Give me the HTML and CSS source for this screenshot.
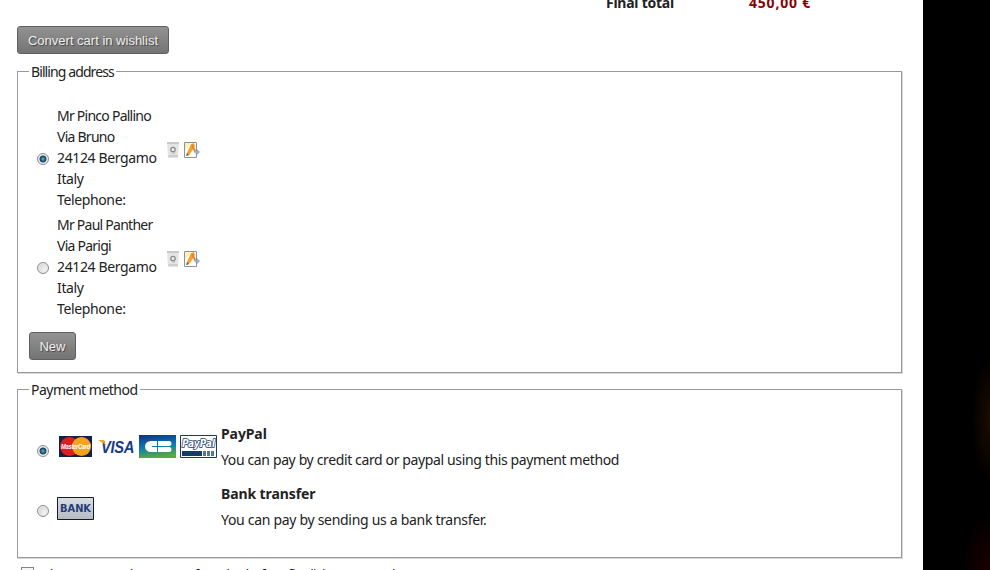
FILE: index.html
```html
<!DOCTYPE html>
<html lang="en">
<head>
    <meta charset="UTF-8">
    <title>Checkout</title>
    <link rel="stylesheet" href="styles.css">
</head>
<body>
    <div class="checkout">
        <div class="total">
            <span class="total-label">Final total</span>
            <span class="total-price">450,00 €</span>
        </div>
        <button class="btn btn-wishlist" type="button">Convert cart in wishlist</button>

        <fieldset class="billing">
            <legend>Billing address</legend>
            <div class="address">
                <span class="radio checked"></span>
                <div class="address-text"><span class="name">Mr Pinco Pallino<br>Via Bruno</span><br>24124 Bergamo<br>Italy<br>Telephone:</div>
                <div class="actions">
                    <svg class="icon" width="16" height="18" viewBox="0 0 16 18">
                        <path d="M2 1h12l-1 16H3z" fill="#e4e4e4"/>
                        <path d="M2 1h12v2H2z" fill="#c9c9c9"/>
                        <path d="M3.5 14h9.5v2H3.5z" fill="#cecece"/>
                        <circle cx="8" cy="8.5" r="2.2" fill="#eee" stroke="#8c8c8c" stroke-width="1.3"/>
                        <path d="M7 12h3" stroke="#aaa"/>
                    </svg>
                    <svg class="icon" width="18" height="18" viewBox="0 0 18 18">
                        <path d="M1.5 1.5h12v15h-12z" fill="#fff" stroke="#8a929b"/>
                        <path d="M2 2h6L2 10z" fill="#fff1b5"/>
                        <path d="M4 12L8 3l3-1 1 3-5 8-3 2z" fill="#f5a12c"/>
                        <path d="M9 4l4 8" stroke="#e18428" stroke-width="2"/>
                        <path d="M4 12l-1 3 3-1z" fill="#805030"/>
                        <path d="M12 10h2V8l3 3-3 3v-2h-2z" fill="#91b1d7"/>
                    </svg>
                </div>
            </div>
            <div class="address">
                <span class="radio"></span>
                <div class="address-text"><span class="name">Mr Paul Panther<br>Via Parigi</span><br>24124 Bergamo<br>Italy<br>Telephone:</div>
                <div class="actions">
                    <svg class="icon" width="16" height="18" viewBox="0 0 16 18">
                        <path d="M2 1h12l-1 16H3z" fill="#e4e4e4"/>
                        <path d="M2 1h12v2H2z" fill="#c9c9c9"/>
                        <path d="M3.5 14h9.5v2H3.5z" fill="#cecece"/>
                        <circle cx="8" cy="8.5" r="2.2" fill="#eee" stroke="#8c8c8c" stroke-width="1.3"/>
                        <path d="M7 12h3" stroke="#aaa"/>
                    </svg>
                    <svg class="icon" width="18" height="18" viewBox="0 0 18 18">
                        <path d="M1.5 1.5h12v15h-12z" fill="#fff" stroke="#8a929b"/>
                        <path d="M2 2h6L2 10z" fill="#fff1b5"/>
                        <path d="M4 12L8 3l3-1 1 3-5 8-3 2z" fill="#f5a12c"/>
                        <path d="M9 4l4 8" stroke="#e18428" stroke-width="2"/>
                        <path d="M4 12l-1 3 3-1z" fill="#805030"/>
                        <path d="M12 10h2V8l3 3-3 3v-2h-2z" fill="#91b1d7"/>
                    </svg>
                </div>
            </div>
            <button class="btn btn-new" type="button">New</button>
        </fieldset>

        <fieldset class="payment">
            <legend>Payment method</legend>
            <div class="method">
                <span class="radio checked"></span>
                <div class="logos">
                    <svg width="37" height="23" viewBox="0 0 37 23">
                        <path d="M2 1h33v21H2z" fill="#14204c"/>
                        <circle cx="12.5" cy="11.5" r="9.5" fill="#df1e20"/>
                        <circle cx="24.5" cy="11.5" r="9.5" fill="#f7a21a"/>
                        <text class="mastercard" x="4" y="14" textLength="29" lengthAdjust="spacingAndGlyphs">MasterCard</text>
                    </svg>
                    <svg width="37" height="23" viewBox="0 0 37 23">
                        <text class="visa" x="3" y="18" textLength="33" lengthAdjust="spacingAndGlyphs">VISA</text>
                        <path d="M0 5h6l2 5z" fill="#f2a52b"/>
                    </svg>
                    <svg width="37" height="23" viewBox="0 0 37 23">
                        <defs>
                            <linearGradient id="cb" x1="0" y1="0" x2="0.2" y2="1">
                                <stop offset="0" stop-color="#162d83"/>
                                <stop offset="0.55" stop-color="#087bb2"/>
                                <stop offset="1" stop-color="#55a943"/>
                            </linearGradient>
                        </defs>
                        <path d="M0 0h37v23H0z" fill="url(#cb)"/>
                        <path d="M18 6h-6a6 5.5 0 0 0 0 11h6v-5h-5v-1h5zM19 6h11a2.5 2.5 0 0 1 0 5H19zM19 12h11a2.5 2.5 0 0 1 0 5H19z" fill="#fff"/>
                    </svg>
                    <svg width="37" height="23" viewBox="0 0 37 23">
                        <path d="M.5.5h36v22H.5z" fill="#fff" stroke="#193b65"/>
                        <text class="paypal" x="2" y="12" textLength="33" lengthAdjust="spacingAndGlyphs">PayPal</text>
                        <path d="M2 16h20v5H2z" fill="#173b65"/>
                        <path d="M23 16h3v5h-3zM27 16h3v5h-3zM31 16h3v5h-3z" fill="#57779a"/>
                    </svg>
                </div>
                <div class="description">
                    <strong>PayPal</strong>
                    <p>You can pay by credit card or paypal using this payment method</p>
                </div>
            </div>
            <div class="method method-bank">
                <span class="radio"></span>
                <div class="logos">
                    <svg width="37" height="23" viewBox="0 0 37 23">
                        <defs>
                            <linearGradient id="bank" x1="0" y1="0" x2="0" y2="1">
                                <stop offset="0" stop-color="#dcdee2"/>
                                <stop offset="1" stop-color="#b5b9c3"/>
                            </linearGradient>
                        </defs>
                        <path d="M.5.5h36v22H.5z" fill="url(#bank)" stroke="#151a25"/>
                        <text class="bank" x="3" y="15" textLength="31" lengthAdjust="spacingAndGlyphs">BANK</text>
                    </svg>
                </div>
                <div class="description">
                    <strong>Bank transfer</strong>
                    <p>You can pay by sending us a bank transfer.</p>
                </div>
            </div>
        </fieldset>

        <div class="terms">
            <span class="checkbox"></span>
            <span class="terms-text">Please accept the terms of service before finalizing your order</span>
        </div>
    </div>
    <div class="side"></div>
</body>
</html>
```
FILE: styles.css
```css
* {
    box-sizing: border-box;
}
body {
    margin: 0;
    display: flex;
    height: 570px;
    overflow: hidden;
    background: #fff;
    color: #222;
    font-family: "Noto Sans", sans-serif;
    font-size: 14px;
    line-height: 21px;
    letter-spacing: -0.37px;
}
.checkout {
    width: 923px;
    height: 570px;
    padding: 0 21px 0 17px;
    overflow: hidden;
}
.total {
    display: flex;
    height: 26px;
    padding-left: 589px;
    font-weight: bold;
    letter-spacing: -0.25px;
}
.total span {
    margin-top: -8px;
}
.total-label {
    width: 143px;
}
.total .total-price {
    color: #8b0000;
    letter-spacing: 0.8px;
}
.btn {
    display: block;
    height: 28px;
    padding: 0;
    border: 1px solid #606060;
    border-radius: 3px;
    background: linear-gradient(#929292, #747474);
    color: #eee;
    font-family: "Liberation Sans", Arial, sans-serif;
    font-size: 13px;
    text-shadow: 1px 1px 1px #444;
}
.btn-wishlist {
    width: 152px;
}
.btn-new {
    width: 47px;
    margin-top: 13px;
}
fieldset {
    margin: 0;
    min-width: 0;
    border: 1px solid #999;
    box-shadow: 1px 1px 0 #d8d8d8;
}
legend {
    height: 21px;
    padding: 0 2px;
    letter-spacing: -0.5px;
}
.billing {
    height: 312px;
    margin-top: 7px;
    padding: 23px 11px 0;
}
.billing legend {
    letter-spacing: -0.9px;
}
.payment {
    height: 179px;
    margin-top: 6px;
    padding: 23px 11px 0;
}
.address {
    display: flex;
    height: 105px;
}
.address + .address {
    margin-top: 4px;
}
.radio {
    flex: none;
    width: 12px;
    height: 12px;
    margin: 48px 8px 0 8px;
    border: 1px solid #8c8c8c;
    border-radius: 50%;
    background: radial-gradient(circle at 65% 65%, #f5f5f5, #c9c9c9);
    box-shadow: inset 0 0 0 1px #eee;
}
.radio.checked {
    background: radial-gradient(circle, #56b8df 0, #173c55 3px, #e5e9ec 4px);
}
.address-text {
    width: 108px;
    white-space: nowrap;
}
.name {
    letter-spacing: -0.75px;
}
.actions {
    display: flex;
    gap: 2px;
    margin-top: 36px;
}
.icon {
    display: block;
}
.method {
    display: flex;
    height: 60px;
}
.method .radio {
    margin-top: 22px;
}
.logos {
    display: flex;
    gap: 4px;
    width: 164px;
    padding-top: 12px;
}
.method-bank .logos {
    padding-top: 14px;
}
.logos svg {
    flex: none;
}
.description strong {
    display: block;
    letter-spacing: -0.1px;
}
.description p {
    margin: 5px 0 0;
    white-space: nowrap;
}
.method-bank p {
    letter-spacing: -0.3px;
}
.mastercard {
    font: italic bold 7px "Liberation Sans", sans-serif;
    fill: #fff;
}
.visa {
    font: italic bold 16px "Liberation Sans", sans-serif;
    fill: #183b87;
}
.paypal {
    font: italic bold 10px "DejaVu Sans", sans-serif;
    letter-spacing: 0;
    fill: #fff;
    stroke: #193b65;
    stroke-width: 1.6px;
    paint-order: stroke;
}
.bank {
    font: bold 10px "DejaVu Sans", sans-serif;
    letter-spacing: 0;
    fill: #233b76;
}
.terms {
    display: flex;
    margin-top: 8px;
    white-space: nowrap;
    letter-spacing: -0.65px;
}
.terms-text {
    margin-top: -2px;
}
.checkbox {
    flex: none;
    width: 13px;
    height: 13px;
    margin: 1px 8px 0 4px;
    border: 1px solid #858585;
    background: #ddd;
    box-shadow: inset 0 0 0 2px #f5f5f5;
}
.side {
    width: 67px;
    background: radial-gradient(ellipse 18px 65px at 100% 420px, #1c0c00, transparent), radial-gradient(ellipse 30px 60px at 100% 100%, #1c0000, transparent), #000;
}
```
